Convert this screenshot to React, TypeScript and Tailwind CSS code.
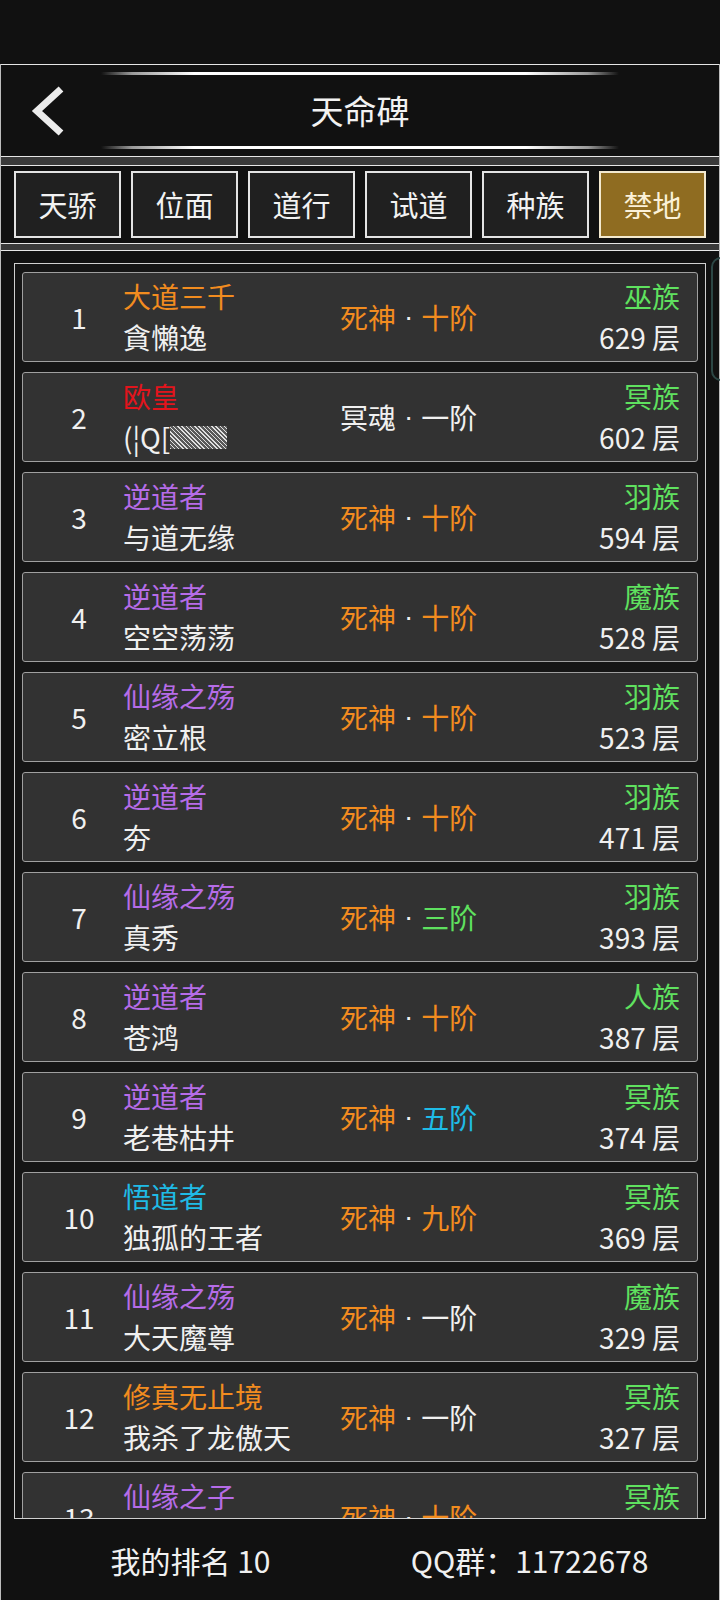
import { Fragment } from 'react';

const TABS = ['天骄', '位面', '道行', '试道', '种族', '禁地'];
const ACTIVE_TAB = 5;

const C = {
  orange: 'text-[#f28c1f]',
  purple: 'text-[#b66ce8]',
  red: 'text-[#e3141c]',
  cyan: 'text-[#1fbbe6]',
  green: 'text-[#5fe15f]',
  white: 'text-[#f0f0f0]',
};

type Row = {
  title: string;
  titleColor: string;
  name: string;
  realm: string;
  realmColor: string;
  stage: string;
  stageColor: string;
  race: string;
  floor: number;
};

const ROWS: Row[] = [
  { title: '大道三千', titleColor: C.orange, name: '貪懶逸', realm: '死神', realmColor: C.orange, stage: '十阶', stageColor: C.orange, race: '巫族', floor: 629 },
  { title: '欧皇', titleColor: C.red, name: '(¦Q[', realm: '冥魂', realmColor: C.white, stage: '一阶', stageColor: C.white, race: '冥族', floor: 602 },
  { title: '逆道者', titleColor: C.purple, name: '与道无缘', realm: '死神', realmColor: C.orange, stage: '十阶', stageColor: C.orange, race: '羽族', floor: 594 },
  { title: '逆道者', titleColor: C.purple, name: '空空荡荡', realm: '死神', realmColor: C.orange, stage: '十阶', stageColor: C.orange, race: '魔族', floor: 528 },
  { title: '仙缘之殇', titleColor: C.purple, name: '密立根', realm: '死神', realmColor: C.orange, stage: '十阶', stageColor: C.orange, race: '羽族', floor: 523 },
  { title: '逆道者', titleColor: C.purple, name: '夯', realm: '死神', realmColor: C.orange, stage: '十阶', stageColor: C.orange, race: '羽族', floor: 471 },
  { title: '仙缘之殇', titleColor: C.purple, name: '真秀', realm: '死神', realmColor: C.orange, stage: '三阶', stageColor: C.green, race: '羽族', floor: 393 },
  { title: '逆道者', titleColor: C.purple, name: '苍鸿', realm: '死神', realmColor: C.orange, stage: '十阶', stageColor: C.orange, race: '人族', floor: 387 },
  { title: '逆道者', titleColor: C.purple, name: '老巷枯井', realm: '死神', realmColor: C.orange, stage: '五阶', stageColor: C.cyan, race: '冥族', floor: 374 },
  { title: '悟道者', titleColor: C.cyan, name: '独孤的王者', realm: '死神', realmColor: C.orange, stage: '九阶', stageColor: C.orange, race: '冥族', floor: 369 },
  { title: '仙缘之殇', titleColor: C.purple, name: '大天魔尊', realm: '死神', realmColor: C.orange, stage: '一阶', stageColor: C.white, race: '魔族', floor: 329 },
  { title: '修真无止境', titleColor: C.orange, name: '我杀了龙傲天', realm: '死神', realmColor: C.orange, stage: '一阶', stageColor: C.white, race: '冥族', floor: 327 },
  { title: '仙缘之子', titleColor: C.purple, name: '孤影', realm: '死神', realmColor: C.orange, stage: '十阶', stageColor: C.orange, race: '冥族', floor: 318 },
];

function GlowLine() {
  return (
    <div className="mx-[100px] h-[3px] bg-[linear-gradient(90deg,transparent,#9a9a9a_6%,#ffffff_18%,#ffffff_82%,#9a9a9a_94%,transparent)]" />
  );
}

function RankRow({ row, rank }: { row: Row; rank: number }) {
  return (
    <div className="flex h-[90px] shrink-0 items-center rounded-[3px] border border-[#a0a0a0] bg-[#323232] text-[28px]">
      <div className="w-[100px] pl-[12px] text-center leading-none text-[#f0f0f0]">{rank}</div>
      <div className="flex w-[217px] flex-col leading-[41px]">
        <span className={row.titleColor}>{row.title}</span>
        <span className="flex items-center whitespace-nowrap text-[#f0f0f0]">
          {row.name}
          {rank === 2 && (
            <span className="inline-block h-[23px] w-[57px] bg-[repeating-linear-gradient(45deg,#e0e0e0_0px,#e0e0e0_1px,#5a5a5a_1px,#5a5a5a_3px)]" />
          )}
        </span>
      </div>
      <div className="flex items-center whitespace-nowrap leading-none">
        <span className={row.realmColor}>{row.realm}</span>
        <span className="px-[8px] text-[#f0f0f0] [font-family:'Liberation_Sans',sans-serif]">·</span>
        <span className={row.stageColor}>{row.stage}</span>
      </div>
      <div className="ml-auto flex flex-col items-end pr-[17px] leading-[41px]">
        <span className={C.green}>{row.race}</span>
        <span className="text-[#f0f0f0]">{row.floor} 层</span>
      </div>
    </div>
  );
}

export default function App() {
  return (
    <div className="h-[1600px] w-[720px] overflow-hidden bg-[#111111] [font-family:'Noto_Sans_CJK_SC','Noto_Sans',sans-serif]">
      {/* status bar area */}
      <div className="h-[64px] bg-[#111111]" />

      <div className="border-x border-b border-[#bdbdbd]">
        {/* header */}
        <div className="h-[93px] border-y border-[#e6e6e6] bg-[#111111] pt-[7px]">
          <GlowLine />
          <div className="grid h-[71px] grid-cols-[1fr_auto_1fr] items-center">
            <div className="pl-[28px]">
              <svg width="38" height="50" viewBox="0 0 38 50" fill="none">
                <polyline points="32,3 8,25 32,47" stroke="#ececec" strokeWidth="7" strokeLinecap="butt" strokeLinejoin="miter" />
              </svg>
            </div>
            <div className="text-[33px] leading-none text-[#f2f2f2]">天命碑</div>
            <div />
          </div>
          <GlowLine />
        </div>

        <div className="h-[8px] bg-[#3a3a3a]" />

        {/* tabs */}
        <div className="h-[79px] border-y border-[#e6e6e6] bg-[#111111] px-[13px] pt-[5px]">
          <div className="grid grid-cols-6 gap-[10px]">
            {TABS.map((t, i) => (
              <div
                key={t}
                className={
                  i === ACTIVE_TAB
                    ? 'flex h-[67px] items-center justify-center border-2 border-[#f3e9cf] bg-[#8f6c21] text-[29px] text-[#fbf1d8]'
                    : 'flex h-[67px] items-center justify-center border-2 border-[#e4e4e4] bg-[#202020] text-[29px] text-[#f2f2f2]'
                }
              >
                {t}
              </div>
            ))}
          </div>
        </div>

        <div className="h-[6px] bg-[#3a3a3a]" />

        {/* ranking list */}
        <div className="relative h-[1270px] border-t border-[#e6e6e6] bg-[#111111] px-[13px] pt-[12px]">
          <div className="h-[1256px] overflow-hidden border border-[#d0d0d0] bg-[#151515] px-[7px] pt-[8px]">
            <div className="flex flex-col gap-[10px]">
              {ROWS.map((r, i) => (
                <Fragment key={i}>
                  <RankRow row={r} rank={i + 1} />
                </Fragment>
              ))}
            </div>
          </div>
          <div className="absolute left-[710px] top-[6px] h-[124px] w-[30px] rounded-[10px] border-2 border-[#2c4745]" />
        </div>

        {/* footer */}
        <div className="flex h-[80px] items-center px-[20px] text-[30px] text-[#f0f0f0]">
          <div className="flex-1 text-center">我的排名 10</div>
          <div className="flex-1 text-center">QQ群：11722678</div>
        </div>
      </div>
    </div>
  );
}
